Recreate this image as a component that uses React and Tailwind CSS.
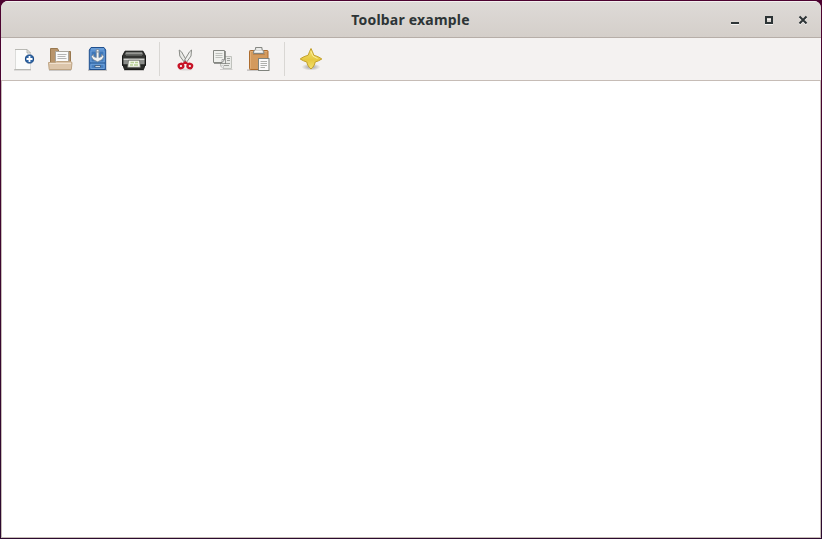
import React from "react";

function Icon({ children }) {
  return (
    <svg className="block h-6 w-6 shrink-0 overflow-visible" viewBox="0 0 24 24" fill="none">
      {children}
    </svg>
  );
}

function NewIcon() {
  return (
    <Icon>
      <rect x="2" y="22" width="17" height="1.5" fill="#000" opacity=".18" />
      <path d="M3.5 2.5H15L18.5 6V22.5H3.5Z" fill="#fcfcfb" stroke="#dcdcda" />
      <path d="M3 2.5H15M3 22.5H19" stroke="#b9b9b4" />
      <path d="M15 2.5V6H18.5Z" fill="#e8e8e5" stroke="#aaaaa5" strokeWidth=".8" />
      <circle cx="17.5" cy="12" r="4.1" fill="#2d65a7" stroke="#174782" />
      <path d="M14.5 12H20.5M17.5 9V15" stroke="#fff" strokeWidth="1.8" />
    </Icon>
  );
}

function OpenIcon() {
  return (
    <Icon>
      <rect x="1" y="22.5" width="22" height="1.2" fill="#000" opacity=".25" />
      <path d="M2.5 18V1.5H9.5L11 4.5H22.5V18Z" fill="#b8946b" stroke="#98784f" />
      <path d="M7.5 17V4.5H20.5V17Z" fill="#fafafa" stroke="#a8a49c" />
      <path d="M9.5 7.5H18.5M9.5 9.5H17.5M9.5 11.5H18.5" stroke="#b5b5b5" />
      <path d="M.5 15.5H7L8.5 14.5H22.5L24 15.5L23.3 22.5H1.2Z" fill="#dcc5aa" stroke="#bea483" />
      <path d="M1.5 16.5H23" stroke="#f0e1cf" />
    </Icon>
  );
}

function SaveIcon() {
  return (
    <Icon>
      <rect x="3" y="22.5" width="19" height="1.2" fill="#000" opacity=".28" />
      <path d="M6 .5H19L20.7 3V22.5H4.3V3Z" fill="#4984c8" stroke="#204f8d" />
      <path d="M6 2H19" stroke="#88b5e6" />
      <path d="M6 4H19V15H6Z" fill="#3e77b9" stroke="#78a8dd" strokeWidth=".8" />
      <path d="M5 16H20" stroke="#265893" />
      <path d="M6 17.3H19V21.5H6Z" fill="#477fc0" stroke="#78a8dd" strokeWidth=".8" />
      <path d="M11.3 2.5H13.9V10.6L16.5 9.5V7L18.8 9.5L17.2 12.5L12.6 14.8L8 12.5L6.4 9.5L8.7 7V9.5L11.3 10.6Z" fill="#f0f2f2" stroke="#71808f" strokeWidth=".7" />
      <path d="M10.5 5H14.7" stroke="#8795a2" />
      <path d="M10 18.5H15.5V20.2H10Z" fill="#fff" stroke="#23456c" strokeWidth=".7" />
    </Icon>
  );
}

function PrintIcon() {
  return (
    <Icon>
      <rect x="2" y="22.4" width="20" height="1.3" fill="#000" opacity=".28" />
      <path d="M3 4.2H21L23.5 9V18.5H.5V9Z" fill="#333432" stroke="#171817" />
      <path d="M4 5.2H20L21 7.5H3Z" fill="#969794" />
      <path d="M4 8.5H20" stroke="#575956" />
      <path d="M1.5 11.5H22.5V13H1.5Z" fill="#d0d1ce" />
      <path d="M1.5 13H6V17.5H1.5ZM18 13H22.5V17.5H18Z" fill="#8a8c89" />
      <path d="M1 18H23L21.5 22.5H2.5Z" fill="#2b2c2a" stroke="#1c1d1b" />
      <path d="M6.5 13.2H17.5L18.3 20.3H5.7Z" fill="#f4f7ec" stroke="#72756e" strokeWidth=".7" />
      <path d="M8.5 15.5H12M13 15.5H16M8 18H11M12 18H16" stroke="#b7cf94" strokeWidth="1.5" />
    </Icon>
  );
}

function CutIcon() {
  return (
    <Icon>
      <ellipse cx="12.5" cy="22.6" rx="7" ry="1" fill="#000" opacity=".1" />
      <path d="M6.2 3L8.5 4.8L13.7 13.8L12.2 16.5L6.8 9Z" fill="#e9e9e6" stroke="#898b86" />
      <path d="M18.5 3L16.5 4.8L11.2 13.8L12.7 16.5L18 9Z" fill="#efefed" stroke="#898b86" />
      <circle cx="12.5" cy="14" r=".8" fill="#747570" />
      <ellipse cx="8" cy="19" rx="2.3" ry="2.2" stroke="#c71427" strokeWidth="2.3" transform="rotate(-25 8 19)" />
      <ellipse cx="16.8" cy="19" rx="2.3" ry="2.2" stroke="#c71427" strokeWidth="2.3" transform="rotate(25 16.8 19)" />
      <path d="M9.8 17L12.3 15.3L15 17" stroke="#c71427" strokeWidth="2" />
    </Icon>
  );
}

function CopyIcon() {
  return (
    <Icon>
      <rect x="10" y="22" width="12.5" height="1" fill="#000" opacity=".15" />
      <path d="M10.5 9.5H21.5V21.5H13.5L10.5 18.8Z" fill="#e9eae7" stroke="#c0c2bd" />
      <path d="M17 11.5H20M17 13.5H20M15 16.5H20M14 18.5H19" stroke="#9d9f9b" />
      <path d="M10.5 18.8H13.5V21.8Z" fill="#fff" stroke="#aaa" strokeWidth=".6" />
      <path d="M4 16.5H15.5V4" stroke="#6e706c" opacity=".7" />
      <path d="M3.5 3.5H14.5V12.5L12 15.5H3.5Z" fill="#f0f1ee" stroke="#858782" />
      <path d="M5.5 6.5H12.5M5.5 8.5H12.5M5.5 10.5H12.5" stroke="#bfc1bd" />
      <path d="M14.5 12.5H12V15.5Z" fill="#fff" stroke="#777" strokeWidth=".6" />
    </Icon>
  );
}

function PasteIcon() {
  return (
    <Icon>
      <rect x="0" y="22.5" width="22" height="1.2" fill="#000" opacity=".25" />
      <rect x="2.5" y="3.5" width="18.5" height="19" rx=".8" fill="#d39a5d" stroke="#ad6c2e" />
      <path d="M3.5 4.5H20M3.5 5V21.5" stroke="#e1ae76" />
      <path d="M6.5 6.5V4L8.5 2.5V.5H15V2.5L16.8 4V6.5Z" fill="#d7d8d5" stroke="#868984" />
      <path d="M9.5 2H14M8 4.7H15.5" stroke="#fff" />
      <rect x="6" y="6.8" width="12" height="1" fill="#8b5a2d" opacity=".4" />
      <rect x="11.5" y="11.5" width="10.5" height="12" fill="#fafafa" stroke="#7f837d" />
      <path d="M13.5 14.5H20M13.5 16.5H20M13.5 18.5H20M13.5 20.5H18" stroke="#aeb0ac" />
    </Icon>
  );
}

function StarIcon() {
  return (
    <Icon>
      <defs>
        <linearGradient id="gold" x1="0" y1="0" x2="0" y2="1">
          <stop stopColor="#f7e477" />
          <stop offset=".55" stopColor="#e6c840" />
          <stop offset="1" stopColor="#f5e370" />
        </linearGradient>
        <radialGradient id="shade">
          <stop stopColor="#000" stopOpacity=".36" />
          <stop offset="1" stopColor="#000" stopOpacity="0" />
        </radialGradient>
      </defs>
      <ellipse cx="12" cy="20" rx="9.5" ry="3.5" fill="url(#shade)" />
      <path d="M12 1.5C13.1 3.5 13.9 5.8 14.8 8.2C17.5 9 20.5 10.2 22.8 12C20.5 13.5 18.5 14.3 16.2 15C15.7 17.8 14.2 20.3 12 22C9.8 20.3 8.3 17.8 7.8 15C5.5 14.3 3.5 13.5 1.2 12C3.5 10.2 6.5 9 9.2 8.2C10.1 5.8 10.9 3.5 12 1.5Z" fill="url(#gold)" stroke="#c3a029" strokeLinejoin="round" />
      <path d="M12 4.5L14 9.2L18.5 11.5" stroke="#fff4a8" strokeWidth=".8" />
    </Icon>
  );
}

function Separator() {
  return <div className="h-[34px] w-px shrink-0 bg-[#d9d7d4]" />;
}

export default function App() {
  return (
    <div className="h-[539px] w-[822px] overflow-hidden bg-[linear-gradient(#4d0230,#2c0a30)] p-px">
      <div className="flex h-full w-full flex-col overflow-hidden rounded-t-[7px] bg-white">
        <header className="grid h-[37px] shrink-0 grid-cols-[1fr_auto_1fr] items-center border-t border-b border-t-[#f3f1f0] border-b-[#b6aea8] bg-linear-to-b from-[#dedad7] to-[#d4cfca]">
          <div />
          <h1 className="pr-px font-['Noto_Sans',sans-serif] text-[14px] leading-5 font-bold tracking-[0.2px] text-[#2d3436]">
            Toolbar example
          </h1>
          <div className="flex items-center justify-end gap-[22px] pr-3 text-[#2d3436]">
            <svg className="h-3 w-3" viewBox="0 0 12 12"><path d="M2 10.5H10" stroke="#f5f3f2" /><path d="M2 9H10" stroke="currentColor" strokeWidth="2" /></svg>
            <svg className="h-3 w-3" viewBox="0 0 12 12" fill="none"><path d="M2 10.5H10M4 5.5H8" stroke="#f5f3f2" /><path d="M3 3H9V9H3Z" stroke="currentColor" strokeWidth="2" /></svg>
            <svg className="h-3 w-3" viewBox="0 0 12 12" fill="none"><path d="M2.5 3.5L9.5 10.5M9.5 3.5L2.5 10.5" stroke="#f5f3f2" strokeWidth="2" /><path d="M2.5 2.5L9.5 9.5M9.5 2.5L2.5 9.5" stroke="currentColor" strokeWidth="2" /></svg>
          </div>
        </header>
        <nav className="flex h-[43px] shrink-0 items-center border-b border-[#c6bcb6] bg-[#f4f2f1] pl-[11px]">
          <div className="flex gap-[13px] pr-[13px]">
            <div className="-mr-px"><NewIcon /></div>
            <OpenIcon />
            <SaveIcon />
            <PrintIcon />
          </div>
          <Separator />
          <div className="flex gap-[13px] px-[13px]">
            <CutIcon />
            <CopyIcon />
            <PasteIcon />
          </div>
          <Separator />
          <div className="pl-3.5">
            <StarIcon />
          </div>
        </nav>
        <main className="flex-1 border-x border-b border-[#c6bcb6] bg-white" />
      </div>
    </div>
  );
}
